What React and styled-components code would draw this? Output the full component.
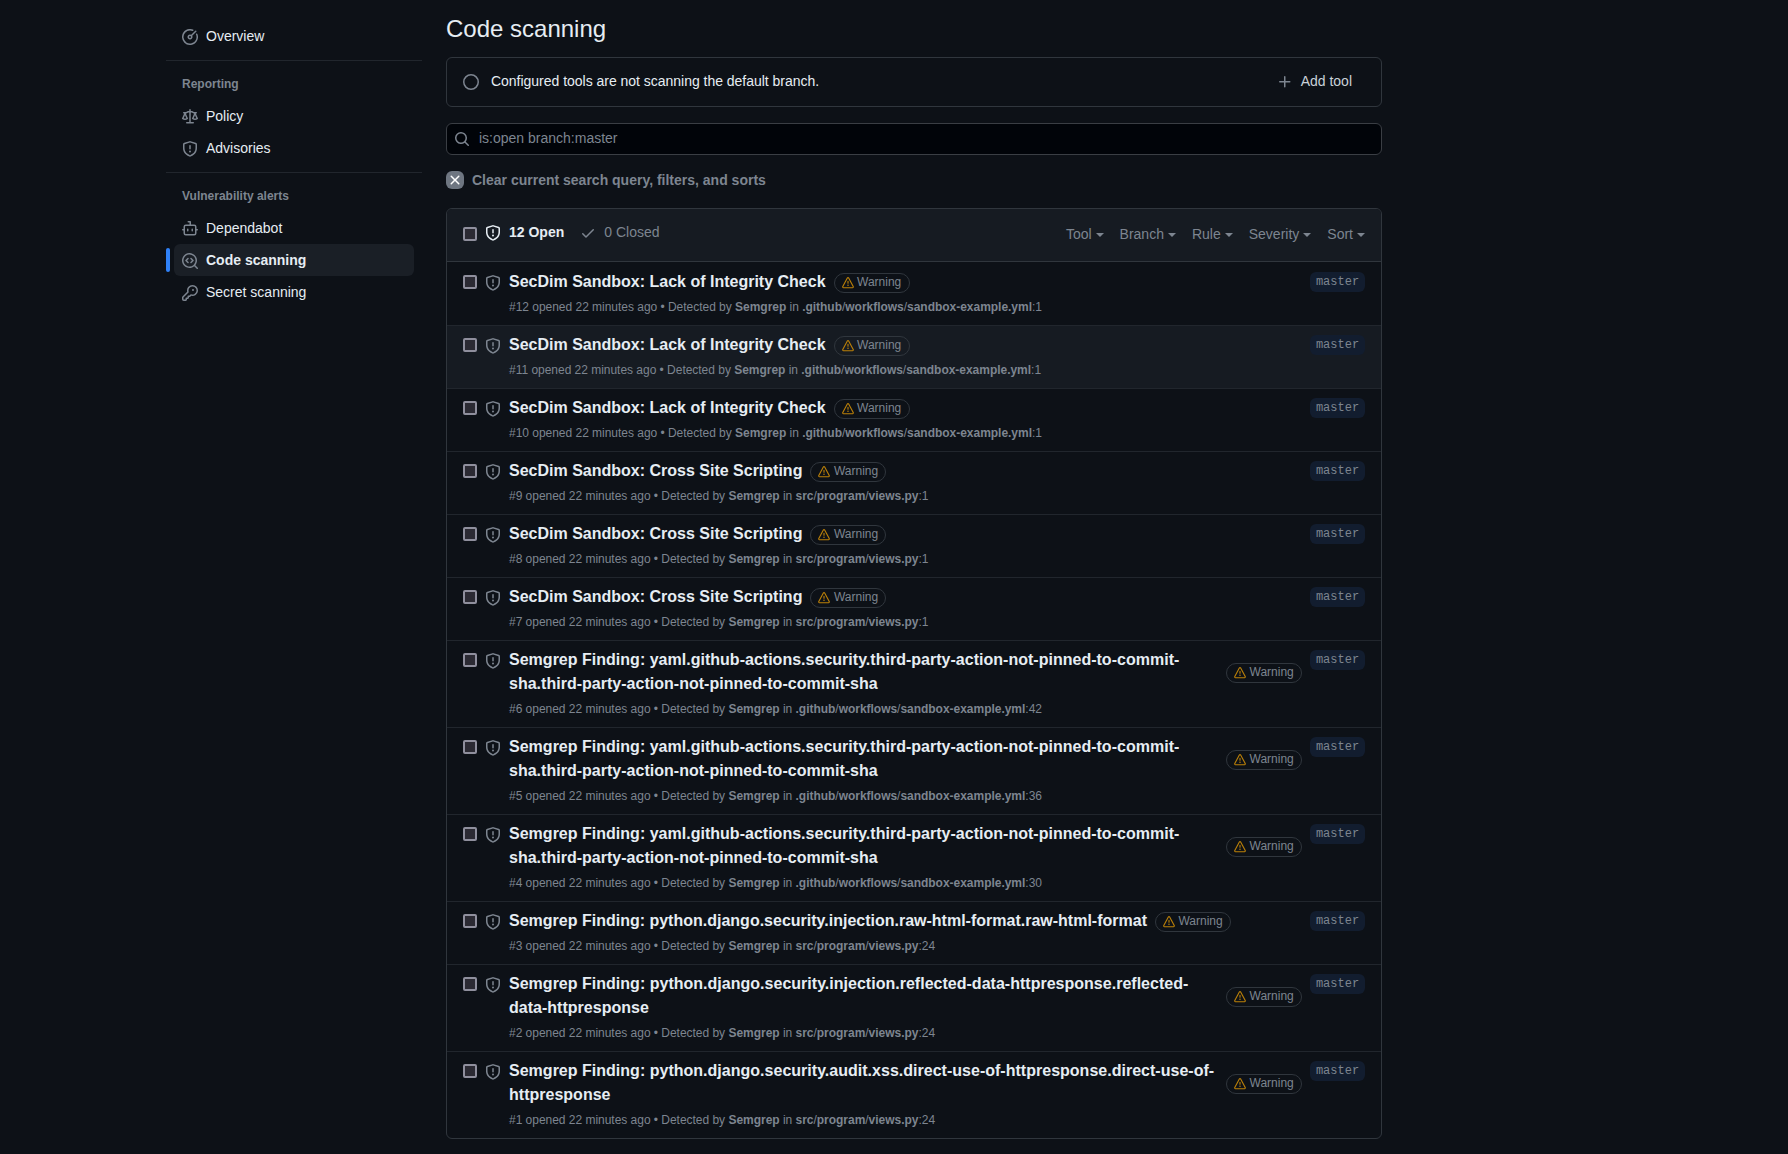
import React from "react";
import styled, { createGlobalStyle } from "styled-components";

const GlobalStyle = createGlobalStyle`
  * { box-sizing: border-box; }
  body {
    margin: 0;
    background: #0d1117;
    color: #e6edf3;
    font-family: "Liberation Sans", Arial, Helvetica, sans-serif;
    font-size: 14px;
    line-height: 21px;
    overflow: hidden;
  }
  h1, p, ul { margin: 0; padding: 0; }
  ul { list-style: none; }
`;

const paths = {
  meter: "M8 1.5a6.5 6.5 0 1 0 6.016 4.035.75.75 0 0 1 1.388-.57 8 8 0 1 1-4.37-4.37.75.75 0 0 1-.569 1.389A6.473 6.473 0 0 0 8 1.5Zm6.28.22a.75.75 0 0 1 0 1.06l-4.063 4.064a2.5 2.5 0 1 1-1.06-1.06L13.22 1.72a.75.75 0 0 1 1.06 0ZM7 8a1 1 0 1 0 2 0 1 1 0 0 0-2 0Z",
  law: "M8.75.75V2h.985c.304 0 .603.08.867.231l1.29.736c.038.022.08.033.124.033h2.234a.75.75 0 0 1 0 1.5h-.427l2.111 4.692a.75.75 0 0 1-.154.838l-.53-.53.529.531-.001.002-.002.002-.006.006-.006.005-.01.01-.045.04c-.21.176-.441.327-.686.45C14.556 10.78 13.88 11 13 11a4.498 4.498 0 0 1-2.023-.454 3.544 3.544 0 0 1-.686-.45l-.045-.04-.016-.015-.006-.006-.004-.004v-.001a.75.75 0 0 1-.154-.838L12.178 4.5h-.162c-.305 0-.604-.079-.868-.231l-1.29-.736a.245.245 0 0 0-.124-.033H8.75V13h2.5a.75.75 0 0 1 0 1.5h-6.5a.75.75 0 0 1 0-1.5h2.5V3.5h-.984a.245.245 0 0 0-.124.033l-1.289.737c-.265.15-.564.23-.869.23h-.162l2.112 4.692a.75.75 0 0 1-.154.838l-.53-.53.529.531-.001.002-.002.002-.006.006-.016.015-.045.04c-.21.176-.441.327-.686.45C4.556 10.78 3.88 11 3 11a4.498 4.498 0 0 1-2.023-.454 3.544 3.544 0 0 1-.686-.45l-.045-.04-.016-.015-.006-.006-.004-.004v-.001a.75.75 0 0 1-.154-.838L2.178 4.5H1.75a.75.75 0 0 1 0-1.5h2.234a.249.249 0 0 0 .125-.033l1.288-.737c.265-.15.564-.23.869-.23h.984V.75a.75.75 0 0 1 1.5 0Zm2.945 8.477c.285.135.718.273 1.305.273s1.02-.138 1.305-.273L13 6.327Zm-10 0c.285.135.718.273 1.305.273s1.02-.138 1.305-.273L3 6.327Z",
  shield: "M7.467.133a1.748 1.748 0 0 1 1.066 0l5.25 1.68A1.75 1.75 0 0 1 15 3.48V7c0 1.566-.32 3.182-1.303 4.682-.983 1.498-2.585 2.813-5.032 3.855a1.697 1.697 0 0 1-1.33 0c-2.447-1.042-4.049-2.357-5.032-3.855C1.32 10.182 1 8.566 1 7V3.48a1.75 1.75 0 0 1 1.217-1.667Zm.61 1.429a.25.25 0 0 0-.153 0l-5.25 1.68a.25.25 0 0 0-.174.238V7c0 1.358.275 2.666 1.057 3.86.784 1.194 2.121 2.34 4.366 3.297a.196.196 0 0 0 .154 0c2.245-.956 3.582-2.104 4.366-3.298C13.225 9.666 13.5 8.36 13.5 7V3.48a.251.251 0 0 0-.174-.237l-5.25-1.68ZM8.75 4.75v3a.75.75 0 0 1-1.5 0v-3a.75.75 0 0 1 1.5 0ZM9 10.5a1 1 0 1 1-2 0 1 1 0 0 1 2 0Z",
  dependabot: "M5.75 7.5a.75.75 0 0 1 .75.75v1.5a.75.75 0 0 1-1.5 0v-1.5a.75.75 0 0 1 .75-.75Zm5.25.75a.75.75 0 0 0-1.5 0v1.5a.75.75 0 0 0 1.5 0v-1.5ZM6.25 0h2A.75.75 0 0 1 9 .75V3.5h3.25a2.25 2.25 0 0 1 2.25 2.25V8h.75a.75.75 0 0 1 0 1.5h-.75v2.75a2.25 2.25 0 0 1-2.25 2.25h-8.5a2.25 2.25 0 0 1-2.25-2.25V9.5H.75a.75.75 0 0 1 0-1.5h.75V5.75A2.25 2.25 0 0 1 3.75 3.5H7.5v-2H6.25a.75.75 0 0 1 0-1.5ZM3 5.75v6.5c0 .414.336.75.75.75h8.5a.75.75 0 0 0 .75-.75v-6.5a.75.75 0 0 0-.75-.75h-8.5a.75.75 0 0 0-.75.75Z",
  codescan: "M8.47 4.97a.75.75 0 0 0 0 1.06L9.94 7.5 8.47 8.97a.75.75 0 1 0 1.06 1.06l2-2a.75.75 0 0 0 0-1.06l-2-2a.75.75 0 0 0-1.06 0ZM6.53 6.03a.75.75 0 0 0-1.06-1.06l-2 2a.75.75 0 0 0 0 1.06l2 2a.75.75 0 1 0 1.06-1.06L5.06 7.5l1.47-1.47ZM12.246 13.307a7.501 7.501 0 1 1 1.06-1.06l2.474 2.473a.749.749 0 1 1-1.06 1.06ZM1.5 7.5a6.002 6.002 0 0 0 3.608 5.504 6.002 6.002 0 0 0 6.486-1.117.748.748 0 0 1 .292-.293A6 6 0 1 0 1.5 7.5Z",
  key: "M10.5 0a5.499 5.499 0 1 1-1.288 10.848l-.932.932a.749.749 0 0 1-.53.22H7v.75a.749.749 0 0 1-.22.53l-.5.5a.749.749 0 0 1-.53.22H5v.75a.749.749 0 0 1-.22.53l-.5.5a.749.749 0 0 1-.53.22h-2A1.75 1.75 0 0 1 0 14.25v-2c0-.199.079-.389.22-.53l4.932-4.932A5.5 5.5 0 0 1 10.5 0Zm-4 5.5c-.001.431.069.86.205 1.269a.75.75 0 0 1-.181.768L1.5 12.56v1.69c0 .138.112.25.25.25h1.69l.06-.06v-1.19a.75.75 0 0 1 .75-.75h1.19l.06-.06v-1.19a.75.75 0 0 1 .75-.75h1.19l1.023-1.025a.75.75 0 0 1 .768-.18A4 4 0 1 0 6.5 5.5ZM11 6a1 1 0 1 1 0-2 1 1 0 0 1 0 2Z",
  alert: "M6.457 1.047c.659-1.234 2.427-1.234 3.086 0l6.082 11.378A1.75 1.75 0 0 1 14.082 15H1.918a1.75 1.75 0 0 1-1.543-2.575Zm1.763.707a.25.25 0 0 0-.44 0L1.698 13.132a.25.25 0 0 0 .22.368h12.164a.25.25 0 0 0 .22-.368Zm.53 3.996v2.5a.75.75 0 0 1-1.5 0v-2.5a.75.75 0 0 1 1.5 0ZM9 11a1 1 0 1 1-2 0 1 1 0 0 1 2 0Z",
  search: "M10.68 11.74a6 6 0 0 1-7.922-8.982 6 6 0 0 1 8.982 7.922l3.04 3.04a.749.749 0 0 1-.326 1.275.749.749 0 0 1-.734-.215ZM11.5 7a4.499 4.499 0 1 0-8.997 0A4.499 4.499 0 0 0 11.5 7Z",
  plus: "M7.75 2a.75.75 0 0 1 .75.75V7h4.25a.75.75 0 0 1 0 1.5H8.5v4.25a.75.75 0 0 1-1.5 0V8.5H2.75a.75.75 0 0 1 0-1.5H7V2.75A.75.75 0 0 1 7.75 2Z",
  check: "M13.78 4.22a.75.75 0 0 1 0 1.06l-7.25 7.25a.75.75 0 0 1-1.06 0L2.22 9.28a.751.751 0 0 1 .018-1.042.751.751 0 0 1 1.042-.018L6 10.94l6.72-6.72a.75.75 0 0 1 1.06 0Z",
  x: "M3.72 3.72a.75.75 0 0 1 1.06 0L8 6.94l3.22-3.22a.749.749 0 0 1 1.275.326.749.749 0 0 1-.215.734L9.06 8l3.22 3.22a.749.749 0 0 1-.326 1.275.749.749 0 0 1-.734-.215L8 9.06l-3.22 3.22a.751.751 0 0 1-1.042-.018.751.751 0 0 1-.018-1.042L6.94 8 3.72 4.78a.75.75 0 0 1 0-1.06Z",
  circle: "M8 0a8 8 0 1 1 0 16A8 8 0 0 1 8 0ZM1.5 8a6.5 6.5 0 1 0 13 0 6.5 6.5 0 0 0-13 0Z",
};

const Svg = styled.svg`
  display: block;
  flex: none;
  fill: ${(p) => p.$color || "#7d8590"};
`;

const Icon = ({ name, size = 16, color }) => (
  <Svg width={size} height={size} viewBox="0 0 16 16" $color={color} aria-hidden="true">
    <path d={paths[name]} />
  </Svg>
);

const Page = styled.div`
  display: flex;
  width: 1788px;
  height: 1154px;
  padding-left: 166px;
  gap: 24px;
  overflow: hidden;
`;

const Sidebar = styled.nav`
  width: 256px;
  padding-top: 20px;
`;

const NavItem = styled.a`
  display: flex;
  align-items: center;
  gap: 8px;
  height: 32px;
  margin: 0 8px;
  padding: 1px 8px 0;
  border-radius: 6px;
  background: ${(p) => (p.$active ? "#1a1f26" : "transparent")};
  font-weight: ${(p) => (p.$active ? 700 : 400)};
`;

const NavLabel = styled.span`
  line-height: 20px;
  margin-top: -2px;
`;

const ActiveRow = styled.div`
  display: flex;
  align-items: center;
  &::before {
    content: "";
    width: 4px;
    height: 24px;
    border-radius: 2px;
    background: #2f81f7;
  }
  ${NavItem} { flex: 1; margin-left: 4px; }
`;

const NavDivider = styled.hr`
  height: 1px;
  margin: 8px 0 7px;
  border: 0;
  background: #21262d;
`;

const NavHeading = styled.div`
  height: 32px;
  padding: 7px 16px 0;
  color: #7d8590;
  font-size: 12px;
  font-weight: 700;
  line-height: 18px;
`;

const Main = styled.main`
  display: flex;
  flex-direction: column;
  width: 936px;
  padding-top: 11px;
`;

const Title = styled.h1`
  height: 46px;
  font-size: 24px;
  font-weight: 400;
  line-height: 36px;
`;

const ToolStatus = styled.section`
  display: flex;
  align-items: center;
  height: 50px;
  padding: 0 29px 0 16px;
  border: 1px solid #30363d;
  border-radius: 6px;
`;

const StatusText = styled.p`
  flex: 1;
  margin: -2px 0 0 12px;
  letter-spacing: -0.02px;
`;

const AddTool = styled.button`
  display: flex;
  align-items: center;
  gap: 8px;
  padding: 0;
  border: 0;
  background: none;
  color: #c9d1d9;
  font: inherit;
  span { margin-top: -2px; }
`;

const SearchBox = styled.label`
  display: flex;
  align-items: center;
  gap: 9px;
  height: 32px;
  margin-top: 16px;
  padding: 0 8px 0 7px;
  border: 1px solid #3a3e44;
  border-radius: 6px;
  background: #010409;
  color: #7d8590;
  span { margin-top: -2px; }
`;

const ClearLink = styled.a`
  display: flex;
  align-items: center;
  gap: 8px;
  height: 18px;
  margin-top: 16px;
  color: #7d8590;
  font-weight: 700;
`;

const ClearIcon = styled.span`
  display: grid;
  place-items: center;
  width: 18px;
  height: 18px;
  border-radius: 6px;
  background: #6e7681;
`;

const AlertBox = styled.section`
  margin-top: 19px;
  border: 1px solid #30363d;
  border-radius: 6px;
  overflow: hidden;
`;

const AlertHeader = styled.header`
  display: flex;
  height: 53px;
  padding: 16px 16px 0;
  border-bottom: 1px solid #30363d;
  background: #161b22;
`;

const Checkbox = styled.span`
  flex: none;
  width: 14px;
  height: 14px;
  margin-top: ${(p) => p.$top}px;
  margin-right: 8px;
  border: 2px solid #8f8f9d;
  border-radius: 2px;
  background: #2b2a33;
`;

const StateTab = styled.a`
  display: flex;
  gap: ${(p) => p.$gap}px;
  margin-right: 16px;
  color: ${(p) => (p.$selected ? "#e6edf3" : "#7d8590")};
  font-weight: ${(p) => (p.$selected ? 700 : 400)};
  line-height: 20px;
  span { margin-top: -3px; }
`;

const Filters = styled.div`
  display: flex;
  gap: 16px;
  margin: -1px 0 0 auto;
  color: #7d8590;
  line-height: 20px;
`;

const Filter = styled.span`
  display: flex;
  align-items: center;
  gap: 4px;
  height: 20px;
  &::after {
    content: "";
    margin-top: 1px;
    border: 4px solid transparent;
    border-top-color: currentColor;
    border-bottom: 0;
  }
`;

const Row = styled.li`
  display: flex;
  padding: 8px 16px;
  border-top: 1px solid #21262d;
  background: ${(p) => (p.$hover ? "#161b22" : "transparent")};
  &:first-child { border-top-color: transparent; }
`;

const ShieldSlot = styled.span`
  padding-top: 4px;
  margin-right: 8px;
`;

const RowBody = styled.div`
  flex: 1;
`;

const RowHead = styled.div`
  display: flex;
  align-items: center;
`;

const RowTitle = styled.a`
  color: #e6edf3;
  font-size: 16px;
  font-weight: 700;
  line-height: 24px;
  white-space: nowrap;
  margin-top: -1px;
  margin-bottom: 1px;
  margin-right: ${(p) => (p.$wrapped ? "auto" : "8px")};
  letter-spacing: ${(p) => (p.$wrapped ? "0.015px" : "0")};
`;

const TitleLine = styled.span`
  display: block;
`;

const Warning = styled.span`
  display: flex;
  align-items: center;
  gap: 4px;
  width: 76px;
  height: 20px;
  padding-left: 7px;
  border: 1px solid #30363d;
  border-radius: 10px;
  color: #7d8590;
  font-size: 12px;
  line-height: 18px;
  span { margin: -2px 0 0 -0.5px; }
`;

const Meta = styled.p`
  margin: 3px 0 1px;
  color: #7d8590;
  font-size: 12px;
  line-height: 18px;
  letter-spacing: -0.025px;
  white-space: nowrap;
`;

const Branch = styled.span`
  width: 55px;
  height: 20px;
  margin: 1px 0 0 8px;
  border-radius: 6px;
  background: #121d2f;
  color: #7d8590;
  font-family: "Liberation Mono", "Courier New", monospace;
  font-size: 12px;
  line-height: 20px;
  text-align: center;
`;

const integrity = ["SecDim Sandbox: Lack of Integrity Check"];
const xss = ["SecDim Sandbox: Cross Site Scripting"];
const unpinned = [
  "Semgrep Finding: yaml.github-actions.security.third-party-action-not-pinned-to-commit-",
  "sha.third-party-action-not-pinned-to-commit-sha",
];
const workflow = [".github", "workflows", "sandbox-example.yml"];
const views = ["src", "program", "views.py"];

const alerts = [
  { id: 12, title: integrity, file: workflow, line: 1 },
  { id: 11, title: integrity, file: workflow, line: 1, hover: true },
  { id: 10, title: integrity, file: workflow, line: 1 },
  { id: 9, title: xss, file: views, line: 1 },
  { id: 8, title: xss, file: views, line: 1 },
  { id: 7, title: xss, file: views, line: 1 },
  { id: 6, title: unpinned, file: workflow, line: 42 },
  { id: 5, title: unpinned, file: workflow, line: 36 },
  { id: 4, title: unpinned, file: workflow, line: 30 },
  { id: 3, title: ["Semgrep Finding: python.django.security.injection.raw-html-format.raw-html-format"], file: views, line: 24 },
  { id: 2, title: ["Semgrep Finding: python.django.security.injection.reflected-data-httpresponse.reflected-", "data-httpresponse"], file: views, line: 24 },
  { id: 1, title: ["Semgrep Finding: python.django.security.audit.xss.direct-use-of-httpresponse.direct-use-of-", "httpresponse"], file: views, line: 24 },
];

const FilePath = ({ parts }) =>
  parts.map((part, i) => (
    <React.Fragment key={part}>
      {i > 0 && "/"}
      <b>{part}</b>
    </React.Fragment>
  ));

const AlertRow = ({ alert }) => (
  <Row $hover={alert.hover}>
    <Checkbox $top={4} />
    <ShieldSlot><Icon name="shield" /></ShieldSlot>
    <RowBody>
      <RowHead>
        <RowTitle $wrapped={alert.title.length > 1}>
          {alert.title.map((line) => <TitleLine key={line}>{line}</TitleLine>)}
        </RowTitle>
        <Warning><Icon name="alert" size={12} color="#bb8009" /><span>Warning</span></Warning>
      </RowHead>
      <Meta>
        #{alert.id} opened 22 minutes ago • Detected by <b>Semgrep</b> in <FilePath parts={alert.file} />:{alert.line}
      </Meta>
    </RowBody>
    <Branch>master</Branch>
  </Row>
);

const NavLink = ({ icon, children, active }) => (
  <NavItem $active={active}><Icon name={icon} /><NavLabel>{children}</NavLabel></NavItem>
);

export default function App() {
  return (
    <>
      <GlobalStyle />
      <Page>
        <Sidebar>
          <NavLink icon="meter">Overview</NavLink>
          <NavDivider />
          <NavHeading>Reporting</NavHeading>
          <NavLink icon="law">Policy</NavLink>
          <NavLink icon="shield">Advisories</NavLink>
          <NavDivider />
          <NavHeading>Vulnerability alerts</NavHeading>
          <NavLink icon="dependabot">Dependabot</NavLink>
          <ActiveRow><NavLink icon="codescan" active>Code scanning</NavLink></ActiveRow>
          <NavLink icon="key">Secret scanning</NavLink>
        </Sidebar>
        <Main>
          <Title>Code scanning</Title>
          <ToolStatus>
            <Icon name="circle" />
            <StatusText>Configured tools are not scanning the default branch.</StatusText>
            <AddTool><Icon name="plus" /><span>Add tool</span></AddTool>
          </ToolStatus>
          <SearchBox><Icon name="search" /><span>is:open branch:master</span></SearchBox>
          <ClearLink><ClearIcon><Icon name="x" color="#ffffff" /></ClearIcon>Clear current search query, filters, and sorts</ClearLink>
          <AlertBox>
            <AlertHeader>
              <Checkbox $top={2} />
              <StateTab $selected $gap={8}><Icon name="shield" color="#e6edf3" /><span>12 Open</span></StateTab>
              <StateTab $gap={8}><Icon name="check" /><span>0 Closed</span></StateTab>
              <Filters>
                <Filter>Tool</Filter>
                <Filter>Branch</Filter>
                <Filter>Rule</Filter>
                <Filter>Severity</Filter>
                <Filter>Sort</Filter>
              </Filters>
            </AlertHeader>
            <ul>{alerts.map((a) => <AlertRow key={a.id} alert={a} />)}</ul>
          </AlertBox>
        </Main>
      </Page>
    </>
  );
}
